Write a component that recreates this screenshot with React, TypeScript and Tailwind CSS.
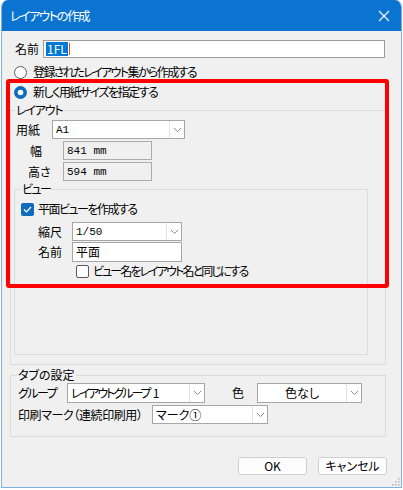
import React from 'react';

const Chevron = () => (
  <span className="flex h-full w-[15px] items-center justify-center border-l border-[#e3e3e3]">
    <svg width="9" height="6" viewBox="0 0 9 6">
      <polyline points="1,1 4.5,4.5 8,1" fill="none" stroke="#8a8a8a" strokeWidth="1" />
    </svg>
  </span>
);

function Combo({ value, width, height = 'h-[19px]', center = false, mono = false, tight = '' }: {
  value: React.ReactNode;
  width: string;
  height?: string;
  center?: boolean;
  mono?: boolean;
  tight?: string;
}) {
  return (
    <div className={`flex ${width} ${height} items-stretch border border-[#a6a6a6] bg-white`}>
      <span
        className={`flex flex-1 items-center leading-[14px] ${center ? 'justify-center' : 'pl-[3px]'} ${
          mono ? "font-['Liberation_Mono',monospace] text-[11px]" : ''
        } ${tight}`}
      >
        {value}
      </span>
      <Chevron />
    </div>
  );
}

function Radio({ checked }: { checked?: boolean }) {
  return (
    <svg width="13" height="13" viewBox="0 0 13 13">
      {checked ? (
        <>
          <circle cx="6.5" cy="6.5" r="6.5" fill="#0f6cbd" />
          <circle cx="6.5" cy="6.5" r="2.8" fill="#ffffff" />
        </>
      ) : (
        <circle cx="6.5" cy="6.5" r="6" fill="#ffffff" stroke="#5a5a5a" strokeWidth="1" />
      )}
    </svg>
  );
}

function Check({ checked }: { checked?: boolean }) {
  return checked ? (
    <span className="flex h-[13px] w-[13px] items-center justify-center rounded-[2px] bg-[#0f6cbd]">
      <svg width="9" height="7" viewBox="0 0 9 7">
        <polyline points="1,3.5 3.5,6 8,1" fill="none" stroke="#ffffff" strokeWidth="1.2" />
      </svg>
    </span>
  ) : (
    <span className="h-[13px] w-[13px] rounded-[2px] border border-[#5a5a5a] bg-white" />
  );
}

function ReadBox({ value }: { value: string }) {
  return (
    <div className="flex h-[19px] w-[89px] items-center border border-[#ababab] bg-[#f0f0f0] pl-[3px] font-['Liberation_Mono',monospace] text-[11px] leading-[14px]">
      {value}
    </div>
  );
}

export default function App() {
  return (
    <div className="relative h-[490px] w-[403px] bg-white pl-[1px] text-[12px] leading-[14px] text-black font-['Noto_Sans_CJK_JP','Noto_Sans',sans-serif] [font-feature-settings:'palt']">
      {/* Dialog window */}
      <div className="relative flex h-[488px] w-[401px] flex-col overflow-hidden rounded-t-[7px] border-x border-b border-[#7fb0e2] bg-[#f0f0f0]">
        {/* Title bar */}
        <div className="flex h-[31px] items-center justify-between bg-[#0a74d0] pl-[8px] pr-[11px] text-[12.5px] text-white">
          <span className="tracking-[-1.6px]">レイアウトの作成</span>
          <svg width="12" height="12" viewBox="0 0 12 12">
            <path d="M1 1 L11 11 M11 1 L1 11" stroke="#ffffff" strokeWidth="1.1" />
          </svg>
        </div>

        <div className="flex flex-col pl-[8px]">
          {/* Name */}
          <div className="mt-[9px] flex h-[18px] items-center pl-[5px]">
            <span className="w-[28px]">名前</span>
            <div className="flex h-[18px] w-[342px] items-center border border-[#9c9c9c] bg-white pl-[2px]">
              <span className="bg-[#0078d7] px-[1px] text-white">1FL</span>
              <span className="ml-[1px] h-[12px] w-[1px] bg-[#c06020]" />
            </div>
          </div>

          {/* Radios */}
          <div className="mt-[6px] flex h-[16px] items-center gap-[6px] pl-[4px]">
            <Radio />
            <span className="tracking-[-1.6px]">登録されたレイアウト集から作成する</span>
          </div>
          <div className="mt-[4px] flex h-[16px] items-center gap-[6px] pl-[4px]">
            <Radio checked />
            <span className="tracking-[-1.5px]">新しく用紙サイズを指定する</span>
          </div>

          {/* Layout group */}
          <fieldset className="mt-[3px] h-[262px] w-[376px] border border-[#dcdcdc] p-0">
            <legend className="ml-[4px] px-[1px] leading-[14px] tracking-[-1.2px]">レイアウト</legend>
            <div className="mt-[3px] flex h-[19px] items-center pl-[5px]">
              <span className="w-[36px]">用紙</span>
              <Combo value="A1" width="w-[133px]" mono />
            </div>
            <div className="mt-[2px] flex h-[19px] items-center pl-[19px]">
              <span className="w-[33px]">幅</span>
              <ReadBox value="841 mm" />
            </div>
            <div className="mt-[2px] flex h-[19px] items-center pl-[17px]">
              <span className="w-[35px]">高さ</span>
              <ReadBox value="594 mm" />
            </div>

            {/* View group */}
            <fieldset className="ml-[3px] mt-[1px] h-[173px] w-[354px] border border-[#dcdcdc] p-0">
              <legend className="ml-[6px] px-[1px] leading-[14px] tracking-[-1.5px]">ビュー</legend>
              <div className="mt-[5px] flex h-[16px] items-center gap-[4px] pl-[6px]">
                <Check checked />
                <span className="tracking-[-1.5px]">平面ビューを作成する</span>
              </div>
              <div className="mt-[5px] flex h-[19px] items-center pl-[23px]">
                <span className="w-[34px]">縮尺</span>
                <Combo value="1/50" width="w-[110px]" mono />
              </div>
              <div className="mt-[1px] flex h-[20px] items-center pl-[23px]">
                <span className="w-[34px]">名前</span>
                <div className="flex h-[20px] w-[110px] items-center border border-[#a6a6a6] bg-white pl-[3px]">
                  平面
                </div>
              </div>
              <div className="mt-[1px] flex h-[16px] items-center gap-[4px] pl-[61px]">
                <Check />
                <span className="tracking-[-1.9px]">ビュー名をレイアウト名と同じにする</span>
              </div>
            </fieldset>
          </fieldset>

          {/* Tab settings */}
          <fieldset className="mt-[3px] h-[69px] w-[376px] border border-[#dcdcdc] p-0">
            <legend className="ml-[6px] px-[1px] leading-[14px]">タブの設定</legend>
            <div className="mt-[1px] flex h-[20px] items-center pl-[7px]">
              <span className="w-[49px] tracking-[-1.5px]">グループ</span>
              <Combo
                value={
                  <>
                    <span className="tracking-[-2px]">レイアウトグループ</span>
                    <span className="ml-[3px]">1</span>
                  </>
                }
                width="w-[138px]"
                height="h-[20px]"
              />
              <span className="ml-[27px] w-[25px]">色</span>
              <Combo value="色なし" width="w-[105px]" height="h-[20px]" center />
            </div>
            <div className="mt-[2px] flex h-[19px] items-center pl-[7px]">
              <span className="w-[134px] tracking-[-0.4px]">印刷マーク（連続印刷用）</span>
              <Combo value="マーク①" width="w-[116px]" />
            </div>
          </fieldset>

          {/* Buttons */}
          <div className="mt-[20px] flex h-[18px] w-[377px] justify-end gap-[11px]">
            <button className="h-[18px] w-[69px] rounded-[3px] border border-[#cfcfcf] bg-[#fdfdfd] leading-[14px]">
              OK
            </button>
            <button className="h-[18px] w-[69px] rounded-[3px] border border-[#cfcfcf] bg-[#fdfdfd] leading-[14px]">
              キャンセル
            </button>
          </div>
        </div>

        {/* Resize grip */}
        <svg className="absolute bottom-[1px] right-[1px]" width="8" height="8" viewBox="0 0 8 8">
          <rect x="6" y="0" width="1.5" height="1.5" fill="#b0b0b0" />
          <rect x="3" y="3" width="1.5" height="1.5" fill="#b0b0b0" />
          <rect x="6" y="3" width="1.5" height="1.5" fill="#b0b0b0" />
          <rect x="0" y="6" width="1.5" height="1.5" fill="#b0b0b0" />
          <rect x="3" y="6" width="1.5" height="1.5" fill="#b0b0b0" />
          <rect x="6" y="6" width="1.5" height="1.5" fill="#b0b0b0" />
        </svg>
      </div>

      {/* Red annotation frame */}
      <div className="pointer-events-none absolute left-[6px] top-[79px] h-[209px] w-[383px] rounded-[3px] border-[4px] border-[#ff0000]" />
    </div>
  );
}
